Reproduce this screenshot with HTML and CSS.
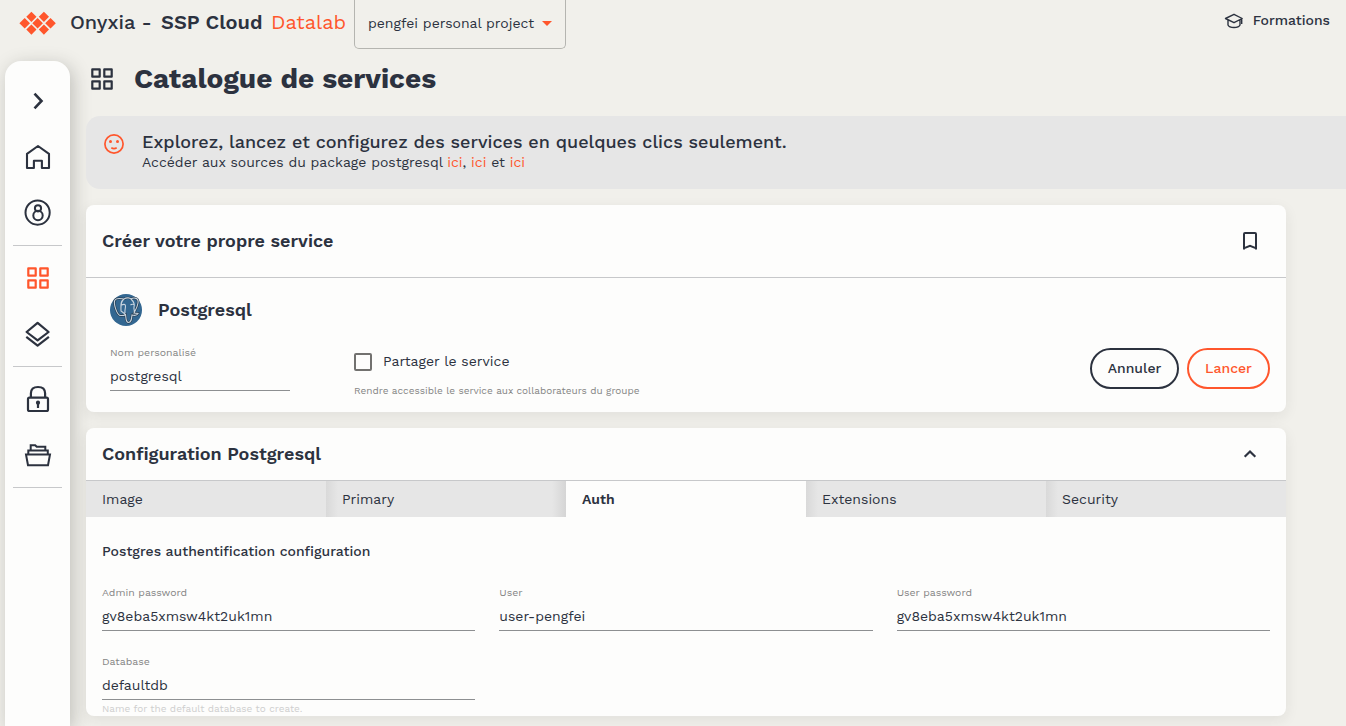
FILE: index.html
```html
<!DOCTYPE html>
<html lang="fr">
<head>
<meta charset="utf-8">
<title>Onyxia - SSP Cloud Datalab</title>
<link rel="stylesheet" href="styles.css">
</head>
<body>
<div class="app">
  <header class="topbar">
    <svg class="logo" width="38" height="24" viewBox="0 0 38 24">
      <path d="M12.400.700l5.100 5.100-5.100 5.100-5.100-5.100zM24.900.700l5.100 5.100-5.100 5.100-5.100-5.100zM5.700 7l5.300 5.200-5.300 5.200-5.300-5.200zM18.600 7l5.300 5.200-5.300 5.200-5.300-5.200zM31.500 7l5.300 5.200-5.300 5.200-5.300-5.200zM12.400 13.500l5.100 5.100-5.100 5.100-5.100-5.100zM24.900 13.500l5.100 5.100-5.100 5.100-5.100-5.100z"/>
    </svg>
    <div class="brand"><span class="brand-name">Onyxia -</span><span class="brand-org">SSP Cloud</span><span class="brand-app">Datalab</span></div>
    <div class="project"><span>pengfei personal project</span><i class="caret"></i></div>
    <a class="training">
      <svg class="icon" width="20" height="18" viewBox="0 0 20 18" stroke-width="1.400" stroke-linejoin="round"><path d="M1.500 6.500L10 2.300 18.200 6.500 10 10.700zM4 8v5c1.500 3.300 10.500 3.300 12 0V8M17.700 7v5"/></svg>
      <span>Formations</span>
    </a>
  </header>
  <div class="body">
    <nav class="sidebar">
      <a class="nav-item"><svg class="icon" width="28" height="28" viewBox="0 0 28 28" stroke-width="2.600"><path d="M10.500 6.700l7 7.300-7 7.300"/></svg></a>
      <a class="nav-item"><svg class="icon" width="28" height="28" viewBox="0 0 28 28" stroke-width="2.100" stroke-linejoin="round"><path d="M14 3L3 10.800V25h6.900v-7.200h8V25H25V10.800z"/></svg></a>
      <a class="nav-item"><svg class="icon" width="28" height="28" viewBox="0 0 28 28" stroke-width="2"><circle cx="13.600" cy="13.600" r="12.100"/><circle cx="14" cy="9.300" r="3.100"/><circle cx="14" cy="16.500" r="4.700"/></svg></a>
      <hr class="nav-line">
      <a class="nav-item active"><svg class="icon" width="28" height="28" viewBox="0 0 28 28" stroke-width="2.200" stroke-linejoin="round"><path d="M4.300 4.300h7.400v7.400H4.300zM16.300 4.300h7.400v7.400h-7.400zM4.300 16.300h7.400v7.400H4.300zM16.300 16.300h7.400v7.400h-7.400z"/></svg></a>
      <a class="nav-item"><svg class="icon" width="28" height="28" viewBox="0 0 28 28" stroke-width="2.200" stroke-linejoin="round"><path d="M13.600 2.800l11 9.200-11 8.400-11-8.400zM2.300 16.800l11.300 8.800 11.300-8.800"/></svg></a>
      <hr class="nav-line">
      <a class="nav-item"><svg class="icon" width="28" height="28" viewBox="0 0 28 28" stroke-width="2.200"><rect x="4" y="12.600" width="20" height="13.400" rx="1.500"/><path d="M6.900 12.500V8.300Q6.900 2 14 2t7.100 6.300v4.200M14 18v5"/><circle cx="14" cy="17.700" r="1"/></svg></a>
      <a class="nav-item"><svg class="icon" width="28" height="28" viewBox="0 0 28 28" stroke-width="2"><path d="M2 13.500h24L24 24.300H4zM4.300 13V9.500h19.500V13M6.700 9V4.200h4.500l1.500 1.600h8.600V9"/></svg></a>
      <hr class="nav-line">
    </nav>
    <main class="main">
      <div class="page-title">
        <svg class="icon" width="28" height="28" viewBox="0 0 28 28" stroke-width="2.200" stroke-linejoin="round"><path d="M4.300 4.300h7.400v7.400H4.300zM16.300 4.300h7.400v7.400h-7.400zM4.300 16.300h7.400v7.400H4.300zM16.300 16.300h7.400v7.400h-7.400z"/></svg>
        <h1>Catalogue de services</h1>
      </div>
      <section class="banner">
        <svg class="smile" width="20" height="20" viewBox="0 0 20 20"><circle class="smile-line" cx="10" cy="10" r="9.100"/><circle cx="6.500" cy="7.500" r="1.500"/><circle cx="13.500" cy="7.500" r="1.500"/><path class="smile-line" d="M7.300 13.800q2.700 1.500 5.400 0"/></svg>
        <div>
          <p class="banner-title">Explorez, lancez et configurez des services en quelques clics seulement.</p>
          <p class="banner-text">Accéder aux sources du package postgresql <a>ici</a>, <a>ici</a> et <a>ici</a></p>
        </div>
      </section>
      <section class="card">
        <div class="card-head tall">
          <h2>Créer votre propre service</h2>
          <svg class="icon" width="24" height="24" viewBox="0 0 24 24" stroke-width="2"><path d="M18 20.500V5q0-1-1-1H7Q6 4 6 5v15.500M5.600 19.400L12 16.800l6.400 2.600"/></svg>
        </div>
        <div class="launch">
          <div class="service">
            <svg width="32" height="32" viewBox="0 0 32 32">
              <circle class="pg-disc" cx="16" cy="16" r="16"/>
              <path class="pg-shadow" d="M11 21.500C7 22 3 9 5 6c2-3 7-1 9-1 3-2 6-1 7 0 3-2 8-1 7 4-.5 4-3 8-4 10l4 .5c-1 2-4 2-6 1.500-.5 5-1 7.500-3.500 7.500-3 0-2.500-6-3-8-2 1.500-3.500 1-4.500 1z"/>
              <path class="pg-line" d="M11 21.500C7 22 3 9 5 6c2-3 7-1 9-1 3-2 6-1 7 0 3-2 8-1 7 4-.5 4-3 8-4 10l4 .5c-1 2-4 2-6 1.500-.5 5-1 7.500-3.500 7.500-3 0-2.500-6-3-8-2 1.500-3.500 1-4.500 1zM14 5c-4 3-3 7-3 12l4 3M11.500 11c2-1 4-1 4 1 0 3-1 4-.5 7M21 5c3 3 4 5 3 8-.5 3 1 3 0 5M20.500 11c1-1 2-1 3.500-.5"/>
            </svg>
            <h2>Postgresql</h2>
          </div>
          <div class="launch-row">
            <div class="field name-field"><label>Nom personalisé</label><div class="value">postgresql</div></div>
            <div class="share">
              <div class="check-row"><i class="checkbox"></i><span>Partager le service</span></div>
              <p class="helper">Rendre accessible le service aux collaborateurs du groupe</p>
            </div>
            <div class="actions"><button class="btn cancel">Annuler</button><button class="btn primary">Lancer</button></div>
          </div>
        </div>
      </section>
      <section class="card">
        <div class="card-head">
          <h2>Configuration Postgresql</h2>
          <svg class="icon" width="24" height="24" viewBox="0 0 24 24" stroke-width="2.200"><path d="M6.700 14.800L12 9.500l5.300 5.300"/></svg>
        </div>
        <div class="tabs">
          <div class="tab">Image</div><div class="tab shaded before-selected">Primary</div><div class="tab selected">Auth</div><div class="tab shaded">Extensions</div><div class="tab shaded">Security</div>
        </div>
        <div class="config">
          <h3>Postgres authentification configuration</h3>
          <div class="grid">
            <div class="field"><label>Admin password</label><div class="value">gv8eba5xmsw4kt2uk1mn</div></div>
            <div class="field"><label>User</label><div class="value">user-pengfei</div></div>
            <div class="field"><label>User password</label><div class="value">gv8eba5xmsw4kt2uk1mn</div></div>
            <div class="field"><label>Database</label><div class="value">defaultdb</div><p class="hint">Name for the default database to create.</p></div>
          </div>
        </div>
      </section>
    </main>
  </div>
</div>
</body>
</html>
```
FILE: styles.css
```css
* { box-sizing: border-box; }
body { margin: 0; background: #f1f0eb; color: #2c323f; font: 14px/20px "Work Sans", Inter, "Noto Sans", sans-serif; overflow: hidden; }
h1, h2, h3, p { margin: 0; }
.app { height: 726px; overflow: hidden; display: flex; flex-direction: column; }
.icon { fill: none; stroke: currentColor; flex: none; }

.topbar { display: flex; height: 49px; flex: none; padding: 0 16px 0 19px; }
.logo { fill: #ff562c; margin-top: 11px; }
.brand { display: flex; width: 297px; margin: 10px 0 0 13px; font-size: 20px; line-height: 25px; white-space: nowrap; }
.brand-name { width: 91px; font-weight: 500; }
.brand-org { width: 110px; font-weight: 600; }
.brand-app { color: #ff562c; }
.project { display: flex; align-items: center; justify-content: space-between; width: 212px; height: 49px; margin-left: -13px; padding: 0 13px 2px; border: 1px solid #b5b5b0; border-top: 0; border-radius: 0 0 5px 5px; white-space: nowrap; }
.caret { border: 5px solid transparent; border-top-color: #ff562c; border-bottom: 0; }
.training { display: flex; align-items: flex-start; gap: 8px; margin-left: auto; padding-top: 10px; font-weight: 500; }
.training .icon { margin: 2px 1px 0 -1px; }

.body { display: flex; flex: 1; min-height: 0; }
.sidebar { width: 65px; flex: none; margin: 12px 0 0 5px; padding: 12px 8px 0; background: #fdfdfc; border-radius: 16px 16px 0 0; box-shadow: 3px 4px 18px rgba(44, 44, 40, .25); }
.nav-item { display: flex; height: 56px; align-items: center; justify-content: center; }
.active { color: #ff562c; }
.nav-line { height: 1px; margin: 4px 0; border: 0; background: #c7c8ca; }
.main { flex: 1; min-width: 0; padding-left: 16px; }

.page-title { display: flex; align-items: center; height: 60px; gap: 18px; padding-left: 2px; }
.page-title h1 { font-size: 28px; line-height: 32px; font-weight: 700; }
.banner { display: flex; height: 73px; margin: 7px 0 16px; padding: 16px 18px; gap: 18px; background: #e6e6e6; border-radius: 14px 0 0 14px; }
.smile { fill: #ff562c; margin-top: 2px; flex: none; }
.smile-line { fill: none; stroke: #ff562c; stroke-width: 1.700; }
.banner-title { font-size: 18px; line-height: 20px; font-weight: 500; }
.banner-text a { color: #ff562c; }

.card { width: 1200px; margin-bottom: 16px; background: #fdfdfc; border-radius: 8px; box-shadow: 0 4px 14px rgba(44, 44, 40, .08); overflow: hidden; }
.card-head { display: flex; align-items: center; justify-content: space-between; height: 53px; padding: 0 24px 0 16px; border-bottom: 1px solid #c7c8ca; }
.tall { height: 73px; }
h2 { font-size: 18px; line-height: 24px; font-weight: 600; }
.launch { height: 134px; padding: 16px 16px 0 24px; }
.service { display: flex; align-items: center; gap: 16px; height: 32px; }
.pg-disc { fill: #336791; }
.pg-shadow { fill: #336791; stroke: #263c50; stroke-width: 2.400; }
.pg-line { fill: none; stroke: #c8d4df; stroke-width: 1.100; }
.launch-row { display: flex; padding-top: 20px; }
.field label { display: block; height: 14px; font-size: 10.5px; line-height: 14px; color: #858585; }
.value { height: 31px; padding-top: 6px; border-bottom: 1px solid #8d8f91; }
.name-field { width: 180px; }
.share { margin-left: 64px; }
.check-row { display: flex; align-items: center; gap: 11px; height: 20px; margin-top: 6px; }
.check-row span { padding-bottom: 2px; }
.checkbox { width: 18px; height: 18px; border: 2px solid #72716f; border-radius: 2px; }
.helper, .hint { font-size: 10px; line-height: 14px; color: #858585; }
.helper { margin-top: 12px; }
.actions { display: flex; gap: 8px; margin: 2px 0 0 auto; height: 41px; }
.btn { padding: 0 0 1px; border: 2px solid; border-radius: 21px; background: none; color: #2c323f; font: 500 14px/20px "Work Sans", Inter, "Noto Sans", sans-serif; }
.cancel { width: 89px; }
.primary { width: 83px; color: #ff562c; }

.tabs { display: grid; grid-template-columns: repeat(5, 1fr); height: 36px; }
.tab { padding: 8px 16px; background: #e6e6e6; }
.shaded { background: linear-gradient(90deg, #d9d9d9, #e6e6e6 12px); }
.before-selected { background: linear-gradient(90deg, #d9d9d9, #e6e6e6 12px, #e6e6e6 226px, #d5d5d5); }
.selected { background: #fdfdfc; font-weight: 600; }
.config { height: 199px; padding: 24px 16px 0; }
h3 { font-size: 14px; line-height: 20px; font-weight: 500; }
.grid { display: grid; grid-template-columns: repeat(3, 1fr); gap: 24px; padding-top: 25px; }
.grid .field { height: 45px; }
.hint { padding-top: 2px; color: #cfcfcf; }
```
